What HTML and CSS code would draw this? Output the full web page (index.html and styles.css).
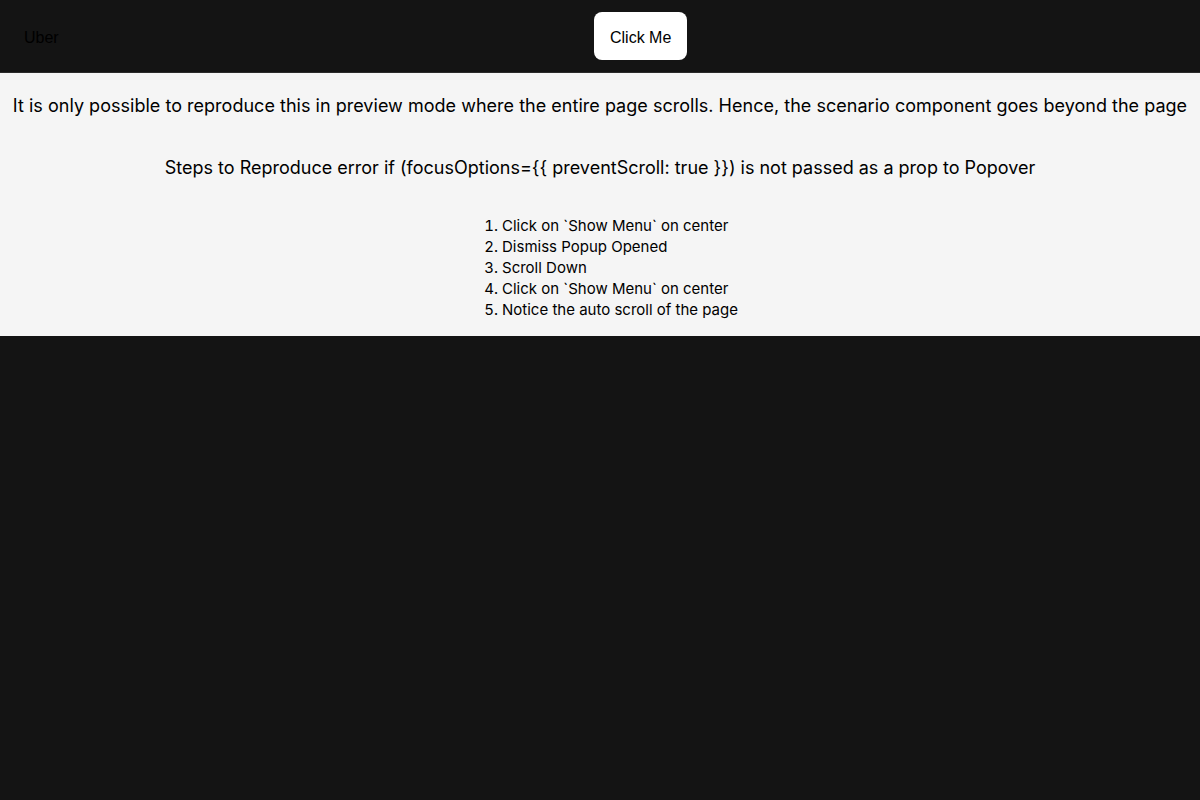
FILE: index.html
```html
<!DOCTYPE html>
<html lang="en">
<head>
<meta charset="utf-8">
<title>Popover scenario</title>
<link rel="stylesheet" href="styles.css">
</head>
<body>
<header class="topbar">
  <div class="brand">Uber</div>
  <button class="cta" type="button">Click Me</button>
</header>
<main class="scenario">
  <p class="intro">It is only possible to reproduce this in preview mode where the entire page scrolls. Hence, the scenario component goes beyond the page</p>
  <p class="subhead">Steps to Reproduce error if (focusOptions={{ preventScroll: true }}) is not passed as a prop to Popover</p>
  <ol class="steps">
    <li>Click on `Show Menu` on center</li>
    <li>Dismiss Popup Opened</li>
    <li>Scroll Down</li>
    <li>Click on `Show Menu` on center</li>
    <li>Notice the auto scroll of the page</li>
  </ol>
</main>
</body>
</html>
```
FILE: styles.css
```css
html, body {
  margin: 0;
  padding: 0;
  background: #141414;
  font-family: Inter, "Liberation Sans", sans-serif;
  color: #000;
}
.topbar {
  display: flex;
  align-items: center;
  height: 73px;
  box-sizing: border-box;
  padding: 0 24px;
  border-bottom: 1px solid #2b2b2b;
  background: #141414;
}
.brand {
  width: 570px;
  padding-top: 4px;
  font-family: "Liberation Sans", Arial, sans-serif;
  font-size: 16px;
  color: #000;
}
.cta {
  height: 48px;
  padding: 3px 16px 0;
  border: none;
  border-radius: 8px;
  background: #fff;
  color: #000;
  font-family: "Liberation Sans", Arial, sans-serif;
  font-size: 16px;
}
.scenario {
  background: #f5f5f5;
  text-align: center;
  padding: 21px 0 16px;
}
.intro {
  margin: 0;
  font-size: 18px;
  line-height: 24px;
  letter-spacing: 0.02px;
}
.subhead {
  margin: 38px 0 0;
  font-size: 18px;
  line-height: 24px;
}
.steps {
  display: table;
  margin: 35px auto 0;
  padding-left: 40px;
  text-align: left;
  font-size: 15px;
  line-height: 21px;
}
```
